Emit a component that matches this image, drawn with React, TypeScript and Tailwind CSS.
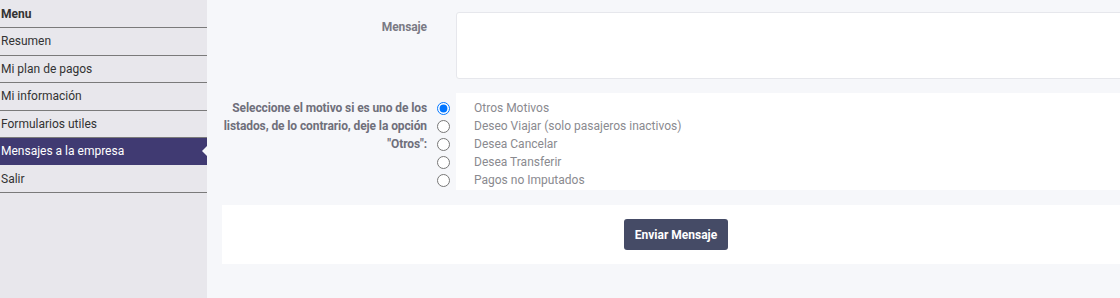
import { useState } from 'react'

const MENU = ['Resumen', 'Mi plan de pagos', 'Mi información', 'Formularios utiles', 'Mensajes a la empresa', 'Salir']

const MOTIVOS = [
  'Otros Motivos',
  'Deseo Viajar (solo pasajeros inactivos)',
  'Desea Cancelar',
  'Desea Transferir',
  'Pagos no Imputados',
]

export default function App() {
  const [motivo, setMotivo] = useState(0)

  return (
    <div className="flex w-[1120px] h-[298px] overflow-hidden bg-[#f6f7fa] font-['Roboto',sans-serif]">
      <aside className="w-[207px] shrink-0 bg-[#e8e7ec] text-[12px] text-[#333]">
        <div className="h-[28px] pl-[1px] flex items-center font-bold border-b border-[#7a7a7a]">Menu</div>
        {MENU.map((item) => {
          const active = item === 'Mensajes a la empresa'
          return (
            <div
              key={item}
              className={`relative h-[27.5px] pl-[1px] flex items-center border-b border-[#7a7a7a] ${
                active ? 'bg-[#403a72] text-white border-[#e8e7ec]' : ''
              }`}
            >
              {item}
              {active && (
                <span className="absolute right-0 top-1/2 -translate-y-1/2 w-0 h-0 border-y-[5px] border-y-transparent border-r-[5px] border-r-[#f6f7fa]" />
              )}
            </div>
          )
        })}
      </aside>

      <main className="flex-1 pl-[13px] pt-[12px]">
        <div className="w-[910px] flex flex-col">
          <div className="flex">
            <label className="w-[207px] pt-[6px] text-right text-[12px] tracking-[-0.1px] leading-[18px] font-bold text-[#7a7a84]">Mensaje</label>
            <div className="w-[29px]" />
            <textarea className="flex-1 h-[67px] bg-white border border-[#e6e7ec] rounded-[3px] resize-none outline-none" />
          </div>

          <div className="flex mt-[14px]">
            <div className="w-[207px] pt-[6px] text-right text-[12px] tracking-[-0.1px] leading-[18px] font-bold text-[#6f6f7a]">
              Seleccione el motivo si es uno de los listados, de lo contrario, deje la opción "Otros":
            </div>
            <div className="w-[29px] pt-[6px] flex flex-col items-center">
              {MOTIVOS.map((m, i) => (
                <label key={m} className="h-[18px] flex items-center">
                  <input
                    type="radio"
                    name="motivo"
                    checked={motivo === i}
                    onChange={() => setMotivo(i)}
                    className="m-0 ml-[4px] w-[13px] h-[13px]"
                  />
                </label>
              ))}
            </div>
            <div className="flex-1 bg-white pt-[6px] pb-[1px] pl-[18px]">
              {MOTIVOS.map((m, i) => (
                <div
                  key={m}
                  onClick={() => setMotivo(i)}
                  className="h-[18px] leading-[18px] text-[12px] text-[#8a8a8f] cursor-pointer"
                >
                  {m}
                </div>
              ))}
            </div>
          </div>

          <div className="mt-[15px] ml-[2px] h-[59px] bg-white flex items-center justify-center">
            <button className="w-[104px] h-[31px] rounded-[3px] bg-[#454b66] text-white text-[12px] font-bold">
              Enviar Mensaje
            </button>
          </div>
        </div>
      </main>
    </div>
  )
}
